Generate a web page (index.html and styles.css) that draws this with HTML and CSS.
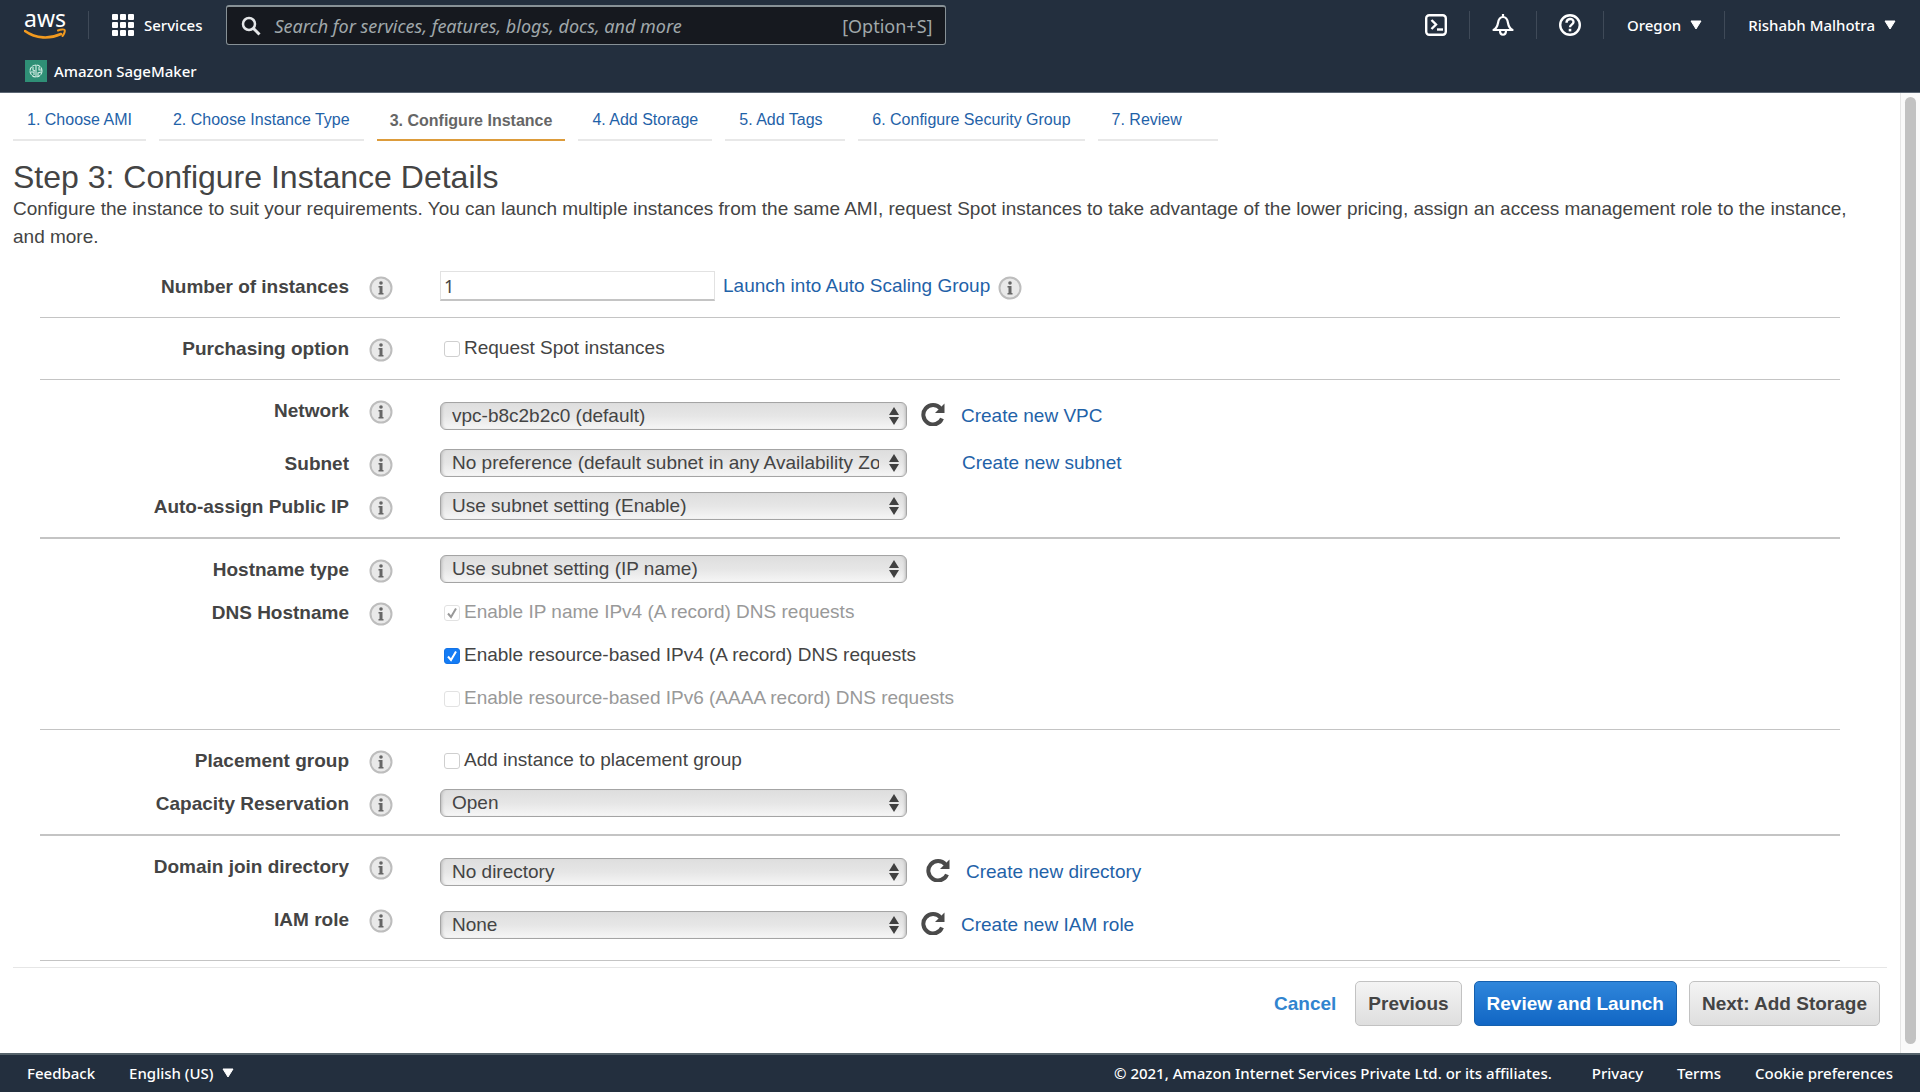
FILE: index.html
```html
<!DOCTYPE html>
<html lang="en">
<head>
<meta charset="utf-8">
<meta name="viewport" content="width=device-width, initial-scale=1">
<title>Launch instance wizard | EC2 Management Console</title>
<link rel="stylesheet" href="styles.css">
</head>
<body>
<svg class="sprite" aria-hidden="true">
  <symbol id="i-info" viewBox="0 0 24 24">
    <circle cx="12" cy="12" r="10.500" fill="#e9e9e9" stroke="#bdbdbd" stroke-width="2"/>
    <circle cx="12" cy="7" r="1.800" fill="#666"/>
    <path d="M9.500 10h4v7h1v1.500h-5V17h1v-5.500h-1z" fill="#666"/>
  </symbol>
  <symbol id="i-refresh" viewBox="0 0 24 24">
    <path d="M19.500 6.500A9.700 9.700 0 1 0 21 16.500" fill="none" stroke="#4a4a4a" stroke-width="4"/>
    <path d="M23.500 1.500v9.500h-9.500z" fill="#4a4a4a"/>
  </symbol>
  <symbol id="i-caret" viewBox="0 0 12 10">
    <path d="M1 1h10L6 9z" fill="#fff" stroke="#fff" stroke-linejoin="round"/>
  </symbol>
</svg>

<header class="topbar">
  <div class="topbar-main">
    <a class="logo" href="#" aria-label="AWS home">
      <svg width="42" height="44" viewBox="0 0 42 44">
        <text x="21" y="24" class="logo-text" text-anchor="middle">aws</text>
        <path d="M1 28c11 8 25 8 36 3" fill="none" stroke="#f29a1f" stroke-width="2.600" stroke-linecap="round"/>
        <path d="M34 27.500c3-1.400 6-1.400 6.600-.5.600 1-.3 4-2.100 6" fill="none" stroke="#f29a1f" stroke-width="2" stroke-linecap="round" stroke-linejoin="round"/>
      </svg>
    </a>
    <button class="services" type="button">
      <svg width="22" height="22" viewBox="0 0 22 22" fill="#fff">
        <rect width="6" height="6" rx="1"/><rect x="8" width="6" height="6" rx="1"/><rect x="16" width="6" height="6" rx="1"/>
        <rect y="8" width="6" height="6" rx="1"/><rect x="8" y="8" width="6" height="6" rx="1"/><rect x="16" y="8" width="6" height="6" rx="1"/>
        <rect y="16" width="6" height="6" rx="1"/><rect x="8" y="16" width="6" height="6" rx="1"/><rect x="16" y="16" width="6" height="6" rx="1"/>
      </svg>
      Services
    </button>
    <div class="search">
      <svg width="20" height="20" viewBox="0 0 20 20" fill="none" stroke="#e4e6e8">
        <circle cx="8" cy="8" r="6" stroke-width="2.500"/><path d="M12.500 12.500l6 6" stroke-width="3"/>
      </svg>
      <input type="text" aria-label="Search" placeholder="Search for services, features, blogs, docs, and more">
      <span class="shortcut">[Option+S]</span>
    </div>
    <nav class="tools">
      <button type="button" aria-label="CloudShell">
        <svg width="22" height="22" viewBox="0 0 22 22" fill="none" stroke="#fff" stroke-width="2.400">
          <rect x="1.200" y="1.200" width="19.600" height="19.600" rx="3"/><path d="M6.500 6l4.500 4.500L6.500 15"/><path d="M12 15.500h6"/>
        </svg>
      </button>
      <button type="button" aria-label="Notifications">
        <svg width="22" height="22" viewBox="0 0 22 22" fill="none" stroke="#fff" stroke-width="2.200">
          <path d="M1.500 16c3.500-2 4-4 4.500-7 .6-4 2.500-6 5-6s4.400 2 5 6c.5 3 1 5 4.500 7z" stroke-linejoin="round"/>
          <path d="M11 0v3"/><path d="M8 16.500c0 5.600 6 5.600 6 0"/>
        </svg>
      </button>
      <button type="button" aria-label="Help">
        <svg width="22" height="22" viewBox="0 0 22 22" fill="none" stroke="#fff" stroke-width="2.400">
          <circle cx="11" cy="11" r="9.800"/><path d="M7.500 8.800c0-5 7-5 7-.8 0 2.600-3.500 2.700-3.500 5.200"/><path d="M11 14.800v2.600" stroke-width="2.600"/>
        </svg>
      </button>
      <button type="button">Oregon <svg class="caret"><use href="#i-caret"/></svg></button>
      <button type="button">Rishabh Malhotra <svg class="caret"><use href="#i-caret"/></svg></button>
    </nav>
  </div>
  <div class="favorites">
    <a href="#">
      <svg width="22" height="22" viewBox="0 0 22 22">
        <rect width="22" height="22" fill="#2f8f76"/>
        <g fill="none" stroke="#d9f0e8" stroke-width="1.100">
          <circle cx="11" cy="11" r="6" stroke-dasharray="4 .7"/>
          <path d="M11 5v12M8 7v3l2 1M6 12h3v3M14 7v3h3M13 16v-3l3-1"/>
        </g>
      </svg>
      Amazon SageMaker
    </a>
  </div>
</header>

<div class="viewport">
  <main class="page">
    <nav class="steps">
      <a href="#">1. Choose AMI</a>
      <a href="#">2. Choose Instance Type</a>
      <a href="#" class="current" aria-current="step">3. Configure Instance</a>
      <a href="#">4. Add Storage</a>
      <a href="#">5. Add Tags</a>
      <a href="#">6. Configure Security Group</a>
      <a href="#">7. Review</a>
    </nav>
    <h1>Step 3: Configure Instance Details</h1>
    <p class="intro">Configure the instance to suit your requirements. You can launch multiple instances from the same AMI, request Spot instances to take advantage of the lower pricing, assign an access management role to the instance, and more.</p>

    <form class="form">
      <section class="group">
        <div class="row">
          <label class="name" for="count">Number of instances</label>
          <svg class="info"><use href="#i-info"/></svg>
          <div class="field">
            <input class="text" id="count" type="text" value="1">
            <a href="#">Launch into Auto Scaling Group</a>
            <svg class="info"><use href="#i-info"/></svg>
          </div>
        </div>
      </section>
      <section class="group">
        <div class="row">
          <span class="name">Purchasing option</span>
          <svg class="info"><use href="#i-info"/></svg>
          <div class="field"><label class="check"><input type="checkbox">Request Spot instances</label></div>
        </div>
      </section>
      <section class="group thick">
        <div class="row tall">
          <label class="name" for="network">Network</label>
          <svg class="info"><use href="#i-info"/></svg>
          <div class="field">
            <select id="network"><option>vpc-b8c2b2c0 (default)</option></select>
            <button class="refresh" type="button" aria-label="Refresh networks"><svg><use href="#i-refresh"/></svg></button>
            <a href="#">Create new VPC</a>
          </div>
        </div>
        <div class="row">
          <label class="name" for="subnet">Subnet</label>
          <svg class="info"><use href="#i-info"/></svg>
          <div class="field">
            <select id="subnet"><option>No preference (default subnet in any Availability Zone)</option></select>
            <a class="solo" href="#">Create new subnet</a>
          </div>
        </div>
        <div class="row">
          <label class="name" for="publicip">Auto-assign Public IP</label>
          <svg class="info"><use href="#i-info"/></svg>
          <div class="field"><select id="publicip"><option>Use subnet setting (Enable)</option></select></div>
        </div>
      </section>
      <section class="group">
        <div class="row">
          <label class="name" for="hostname">Hostname type</label>
          <svg class="info"><use href="#i-info"/></svg>
          <div class="field"><select id="hostname"><option>Use subnet setting (IP name)</option></select></div>
        </div>
        <div class="row">
          <span class="name">DNS Hostname</span>
          <svg class="info"><use href="#i-info"/></svg>
          <div class="field"><label class="check off"><input type="checkbox" checked disabled>Enable IP name IPv4 (A record) DNS requests</label></div>
        </div>
        <div class="row">
          <div class="field"><label class="check"><input type="checkbox" checked>Enable resource-based IPv4 (A record) DNS requests</label></div>
        </div>
        <div class="row">
          <div class="field"><label class="check off"><input type="checkbox" disabled>Enable resource-based IPv6 (AAAA record) DNS requests</label></div>
        </div>
      </section>
      <section class="group thick">
        <div class="row">
          <span class="name">Placement group</span>
          <svg class="info"><use href="#i-info"/></svg>
          <div class="field"><label class="check"><input type="checkbox">Add instance to placement group</label></div>
        </div>
        <div class="row">
          <label class="name" for="capacity">Capacity Reservation</label>
          <svg class="info"><use href="#i-info"/></svg>
          <div class="field"><select id="capacity"><option>Open</option></select></div>
        </div>
      </section>
      <section class="group">
        <div class="row tall">
          <label class="name" for="domain">Domain join directory</label>
          <svg class="info"><use href="#i-info"/></svg>
          <div class="field spaced">
            <select id="domain"><option>No directory</option></select>
            <button class="refresh" type="button" aria-label="Refresh directories"><svg><use href="#i-refresh"/></svg></button>
            <a href="#">Create new directory</a>
          </div>
        </div>
        <div class="row tall">
          <label class="name" for="iam">IAM role</label>
          <svg class="info"><use href="#i-info"/></svg>
          <div class="field">
            <select id="iam"><option>None</option></select>
            <button class="refresh" type="button" aria-label="Refresh roles"><svg><use href="#i-refresh"/></svg></button>
            <a href="#">Create new IAM role</a>
          </div>
        </div>
      </section>
    </form>

    <div class="actions">
      <a class="cancel" href="#">Cancel</a>
      <button class="btn" type="button">Previous</button>
      <button class="btn primary" type="button">Review and Launch</button>
      <button class="btn" type="button">Next: Add Storage</button>
    </div>
  </main>
  <div class="scrollbar" aria-hidden="true"><div class="thumb"></div></div>
</div>

<footer class="footer">
  <a href="#">Feedback</a>
  <button type="button">English (US) <svg class="caret"><use href="#i-caret"/></svg></button>
  <span class="copyright">© 2021, Amazon Internet Services Private Ltd. or its affiliates.</span>
  <a href="#">Privacy</a>
  <a href="#">Terms</a>
  <a href="#">Cookie preferences</a>
</footer>
</body>
</html>
```
FILE: styles.css
```css
* { box-sizing: border-box; }

body {
  margin: 0;
  min-height: 100vh;
  display: flex;
  flex-direction: column;
  background: #fff;
  color: #444;
  font: 19px/28px "Liberation Sans", Arial, sans-serif;
}

a { color: #1f62a8; text-decoration: none; }
button { border: 0; padding: 0; background: none; font: inherit; color: inherit; cursor: pointer; }
svg { display: block; flex: none; }
.sprite { position: absolute; width: 0; height: 0; }
.caret { width: 12px; height: 10px; }

/* Top bar */
.topbar, .footer {
  background: #232f3e;
  color: #fff;
  font: 500 15px/22px "Noto Sans", "Open Sans", sans-serif;
}
.topbar a, .footer a { color: #fff; }
.topbar { border-bottom: 1px solid #5b6673; }
.topbar-main { display: flex; align-items: center; height: 50px; padding-left: 24px; }
.logo { display: flex; align-items: center; height: 28px; padding-right: 22px; border-right: 1px solid #3f4a58; }
.logo-text { font: 400 23px "Noto Sans", sans-serif; fill: #fff; }
.services { display: flex; align-items: center; gap: 10px; margin-left: 23px; }
.search {
  display: flex;
  align-items: center;
  gap: 13px;
  flex: 0 1 720px;
  height: 40px;
  margin-left: 24px;
  padding: 0 13px 0 14px;
  border: 1px solid #879196;
  border-top-width: 2px;
  border-radius: 3px;
  background: #16191f;
  color: #a0a8ab;
  font-size: 18px;
  font-weight: 400;
}
.search input { flex: 1; min-width: 0; padding: 0; border: 0; outline: 0; background: none; font: inherit; color: #fff; }
.search input::placeholder { color: #a0a8ab; font-style: italic; opacity: 1; }
.tools { display: flex; margin-left: auto; }
.tools button { display: flex; align-items: center; gap: 9px; height: 28px; padding: 0 22px 0 23px; }
.tools button + button { border-left: 1px solid #3f4a58; }
.tools button:nth-child(-n+3) { padding-left: 22px; }
.tools button:last-child { padding-right: 24px; }
.favorites { height: 42px; padding: 10px 25px; }
.favorites a { display: inline-flex; align-items: center; gap: 7px; }

/* Page */
.viewport { flex: 1; display: flex; }
.page { flex: 1; min-width: 0; padding: 0 13px; }

.steps { display: flex; gap: 13px; height: 48px; font-size: 16px; line-height: 20px; }
.steps a { min-width: 120px; padding: 17px 14px 0; border-bottom: 2px solid #e8e8e8; }
.steps .current { padding: 18px 13px 0; color: #666; font-weight: bold; border-color: #dd9c3b; }

h1 { margin: 18px 0 0; font-size: 32px; font-weight: 400; line-height: 36px; }
.intro { margin: 0 40px 0 0; }

.form { margin: 0 47px 0 27px; }
.group { padding: 9px 0; border-bottom: 1px solid #c4c4c4; }
.group:first-child { padding-top: 14px; }
.group.thick { border-bottom-width: 2px; }
.row { display: grid; grid-template-columns: 309px 24px 1fr; column-gap: 20px; height: 43px; align-items: start; }
.row.tall { height: 53px; }
.name { margin-top: 8px; text-align: right; font-weight: bold; }
.info { width: 24px; height: 24px; margin-top: 11px; }
.field { grid-column: 3; display: flex; align-items: center; gap: 8px; height: 42px; margin-left: 27px; }
.tall .field { height: 54px; }
.field .info { margin: 4px 0 0; }

.text {
  width: 275px;
  height: 30px;
  padding: 0 3px;
  border: 1px solid #e2e2e2;
  border-bottom: 2px solid #c4c4c4;
  font: 18px "Noto Sans", sans-serif;
  color: #444;
}

select {
  appearance: none;
  width: 467px;
  height: 28px;
  padding: 0 27px 0 11px;
  border: 1px solid #a4a4a4;
  border-radius: 6px;
  color: #444;
  font: inherit;
  line-height: 24px;
  background:
    url("data:image/svg+xml,%3Csvg xmlns='http://www.w3.org/2000/svg' width='12' height='20'%3E%3Cpath d='M6 1l5 8H1zM6 19l5-8H1z' fill='%23404040'/%3E%3C/svg%3E") right 6px center no-repeat,
    linear-gradient(#dedede, #e6e6e6 50%, #f6f6f6);
  box-shadow: inset 3px 0 3px -2px #bbb, inset -3px 0 3px -2px #bbb;
}

.refresh { margin: 0 8px 4px 6px; }
.refresh svg { width: 24px; height: 24px; }
.spaced .refresh { margin-left: 11px; }
.solo { margin-left: 47px; }

.check { display: flex; align-items: center; gap: 4px; }
.check.off { color: #999; }
.check input {
  appearance: none;
  width: 16px;
  height: 16px;
  margin: 2px 0 0 4px;
  border: 1px solid #cfcfcf;
  border-radius: 3px;
  background: #fff center / 14px 14px no-repeat;
}
.check input:checked {
  border-color: #1473e6;
  background-color: #147cf5;
  background-image: url("data:image/svg+xml,%3Csvg xmlns='http://www.w3.org/2000/svg' viewBox='0 0 14 14'%3E%3Cpath d='M3 7.500l3 3.500 5-8.500' fill='none' stroke='%23fff' stroke-width='2'/%3E%3C/svg%3E");
}
.check input:disabled { border-color: #e2e2e2; background-color: #fff; }
.check input:checked:disabled {
  background-image: url("data:image/svg+xml,%3Csvg xmlns='http://www.w3.org/2000/svg' viewBox='0 0 14 14'%3E%3Cpath d='M3 7.500l3 3.500 5-8.500' fill='none' stroke='%23999' stroke-width='2'/%3E%3C/svg%3E");
}

.actions {
  display: flex;
  justify-content: flex-end;
  align-items: center;
  gap: 12px;
  margin-top: 6px;
  padding: 13px 7px 24px;
  border-top: 1px solid #e6e6e6;
  font-weight: bold;
}
.cancel { margin-right: 7px; color: #3184cf; }
.btn {
  height: 45px;
  padding: 0 12px;
  border: 1px solid #c2c2c2;
  border-radius: 5px;
  background: linear-gradient(#f4f4f4, #dedede);
}
.btn.primary { border-color: #1560ae; background: linear-gradient(#2f86db, #1166c4); color: #fff; }

.scrollbar { width: 20px; padding: 4px 3px 9px 4px; border-left: 1px solid #e6e6e6; background: #fafafa; display: flex; }
.thumb { flex: 1; margin-right: 1px; border-radius: 6px; background: #c2c2c2; }

/* Footer */
.footer { display: flex; align-items: center; gap: 34px; height: 39px; padding: 0 27px 2px; border-top: 2px solid #56636b; }
.footer button { display: flex; align-items: center; gap: 8px; }
.copyright { margin: 0 6px 0 auto; }
```
